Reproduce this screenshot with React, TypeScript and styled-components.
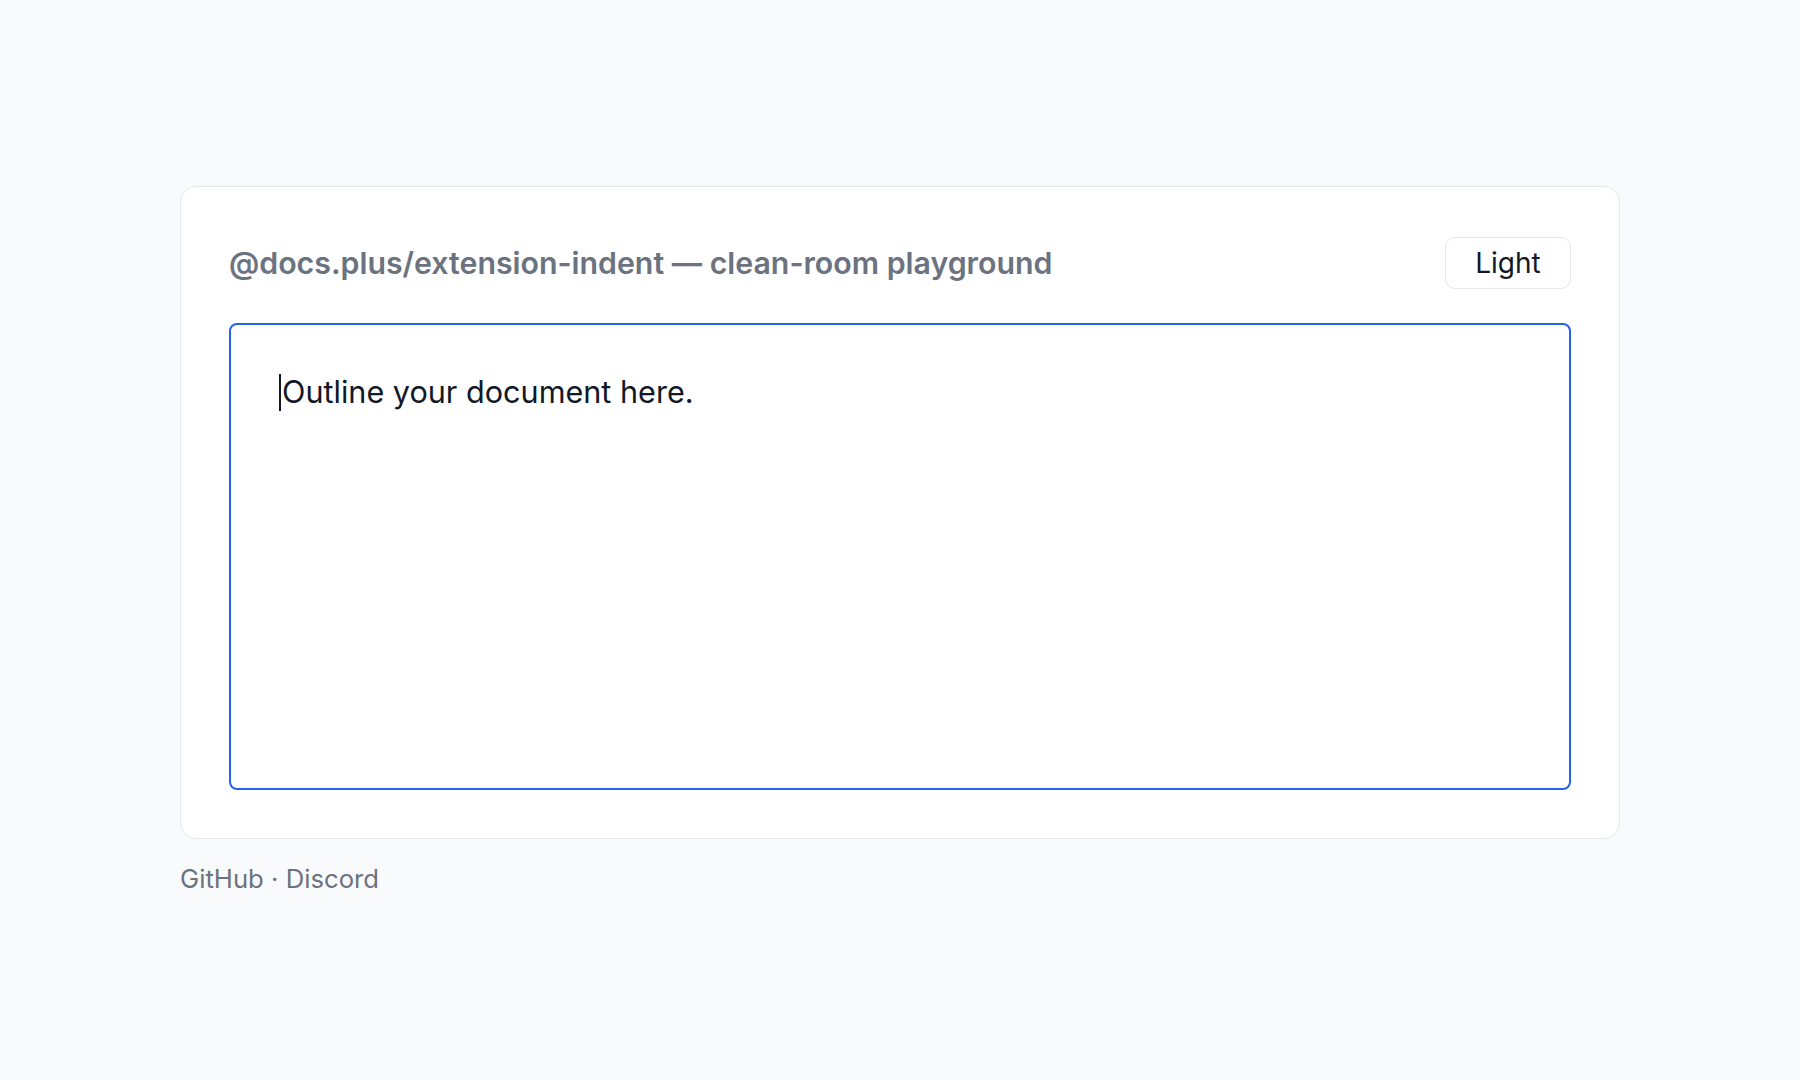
import styled, { createGlobalStyle } from "styled-components"

const Global = createGlobalStyle`
html, body {
  margin: 0;
  padding: 0;
  background: #f9fafb;
  font-family: Inter, "Noto Sans", sans-serif;
}
`

const Page = styled.main`
min-height: 100vh;
box-sizing: border-box;
display: flex;
flex-direction: column;
justify-content: center;
align-items: center;
`

const Wrap = styled.div`
width: 1440px;
`

const Card = styled.section`
box-sizing: border-box;
background: #ffffff;
border: 1px solid #e5e7eb;
border-radius: 16px;
padding: 48px;
display: flex;
flex-direction: column;
gap: 32px;
`

const Header = styled.header`
min-height: 56px;
display: flex;
align-items: center;
justify-content: space-between;
`

const Title = styled.h1`
margin: 0;
font-size: 30.3px;
font-weight: 600;
color: #6b7280;
`

const ThemeButton = styled.button`
font-family: inherit;
font-size: 28px;
color: #111827;
background: #ffffff;
border: 1px solid #e5e7eb;
border-radius: 10px;
width: 126px;
height: 52px;
padding: 0;
cursor: pointer;
`

const Editor = styled.div`
box-sizing: border-box;
height: 467px;
border: 2px solid #2563eb;
border-radius: 8px;
padding: 48px;
font-size: 30.6px;
color: #111827;
outline: none;
`

const Caret = styled.span`
display: inline-block;
width: 2px;
height: 1.2em;
background: #111827;
vertical-align: -0.25em;
margin-right: 1px;
`

const Footer = styled.footer`
margin-top: 24px;
font-size: 25.7px;
color: #6b7280;
`

export default function App() {
  return (
    <>
      <Global />
      <Page>
        <Wrap>
          <Card>
            <Header>
              <Title>@docs.plus/extension-indent — clean-room playground</Title>
              <ThemeButton>Light</ThemeButton>
            </Header>
            <Editor>
              <Caret />Outline your document here.
            </Editor>
          </Card>
          <Footer>GitHub · Discord</Footer>
        </Wrap>
      </Page>
    </>
  )
}
